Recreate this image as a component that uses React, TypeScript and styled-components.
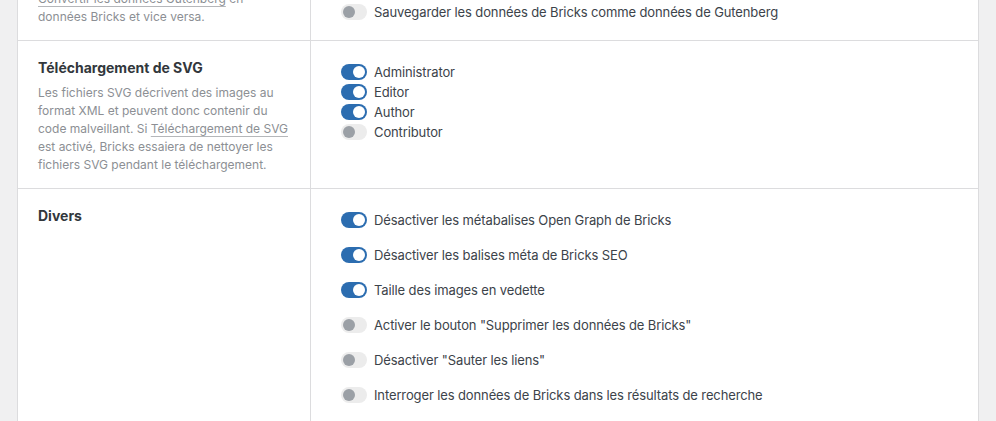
import React from "react";
import styled, { createGlobalStyle } from "styled-components";

const Global = createGlobalStyle`
  html, body { margin: 0; padding: 0; background: #f0f0f1; }
  body { font-family: Inter, "Liberation Sans", Arial, sans-serif; overflow: hidden; }
`;

const Page = styled.div`
  padding: 0 17px 0 17px;
  margin-top: -53px;
`;

const Card = styled.div`
  background: #fff;
  border-left: 1px solid #dcdcde;
  border-right: 1px solid #dcdcde;
`;

const Row = styled.div`
  display: grid;
  grid-template-columns: 293px 1fr;
  border-bottom: 1px solid #dcdcde;
`;

const LeftCell = styled.div`
  padding: 17px 20px 14px 20px;
  border-right: 1px solid #dcdcde;
`;

const RightCell = styled.div<{ $bottom?: boolean; $gap: number; $top?: number }>`
  display: flex;
  flex-direction: column;
  justify-content: ${(p) => (p.$bottom ? "flex-end" : "flex-start")};
  gap: ${(p) => p.$gap}px;
  padding: ${(p) => (p.$bottom ? "0 30px 18px 30px" : `${p.$top ?? 21}px 30px 20px 30px`)};
`;

const Title = styled.div`
  font-size: 14px;
  line-height: 20px;
  font-weight: 700;
  color: #32373c;
`;

const Desc = styled.div`
  margin-top: 6px;
  font-size: 12px;
  line-height: 18px;
  color: #8c8f94;
`;

const Link = styled.span`
  text-decoration: underline;
  text-decoration-color: #b5b7ba;
  text-underline-offset: 3px;
`;

const Item = styled.label`
  display: flex;
  align-items: center;
  gap: 7px;
  height: 20px;
  font-size: 13px;
  letter-spacing: -0.12px;
  color: #3c434a;
`;

const Track = styled.span<{ $on: boolean }>`
  position: relative;
  width: 26px;
  height: 16px;
  border-radius: 8px;
  flex: none;
  background: ${(p) => (p.$on ? "#2c6db0" : "#ececec")};
`;

const Knob = styled.span<{ $on: boolean }>`
  position: absolute;
  top: 2px;
  left: ${(p) => (p.$on ? "12px" : "2px")};
  width: 12px;
  height: 12px;
  border-radius: 50%;
  background: ${(p) => (p.$on ? "#fff" : "#9ba0a6")};
`;

const Toggle = ({ on, label }: { on: boolean; label: string }) => (
  <Item>
    <Track $on={on}>
      <Knob $on={on} />
    </Track>
    {label}
  </Item>
);

export default function App() {
  return (
    <>
      <Global />
      <Page>
        <Card>
          <Row>
            <LeftCell>
              <Title>Données Gutenberg</Title>
              <Desc>
                <Link>Convertir les données Gutenberg</Link> en
                <br />
                données Bricks et vice versa.
              </Desc>
            </LeftCell>
            <RightCell $bottom $gap={0}>
              <Toggle on={false} label="Sauvegarder les données de Bricks comme données de Gutenberg" />
            </RightCell>
          </Row>
          <Row>
            <LeftCell>
              <Title>Téléchargement de SVG</Title>
              <Desc>
                Les fichiers SVG décrivent des images au format XML et peuvent donc contenir du code
                malveillant. Si <Link>Téléchargement de SVG</Link> est activé, Bricks essaiera de
                nettoyer les fichiers SVG pendant le téléchargement.
              </Desc>
            </LeftCell>
            <RightCell $gap={0} $top={21}>
              <Toggle on label="Administrator" />
              <Toggle on label="Editor" />
              <Toggle on label="Author" />
              <Toggle on={false} label="Contributor" />
            </RightCell>
          </Row>
          <Row>
            <LeftCell>
              <Title>Divers</Title>
            </LeftCell>
            <RightCell $gap={15} $top={21}>
              <Toggle on label="Désactiver les métabalises Open Graph de Bricks" />
              <Toggle on label="Désactiver les balises méta de Bricks SEO" />
              <Toggle on label="Taille des images en vedette" />
              <Toggle on={false} label={'Activer le bouton "Supprimer les données de Bricks"'} />
              <Toggle on={false} label={'Désactiver "Sauter les liens"'} />
              <Toggle on={false} label="Interroger les données de Bricks dans les résultats de recherche" />
              <Toggle on={false} label="Activer le mode maintenance" />
            </RightCell>
          </Row>
        </Card>
      </Page>
    </>
  );
}
